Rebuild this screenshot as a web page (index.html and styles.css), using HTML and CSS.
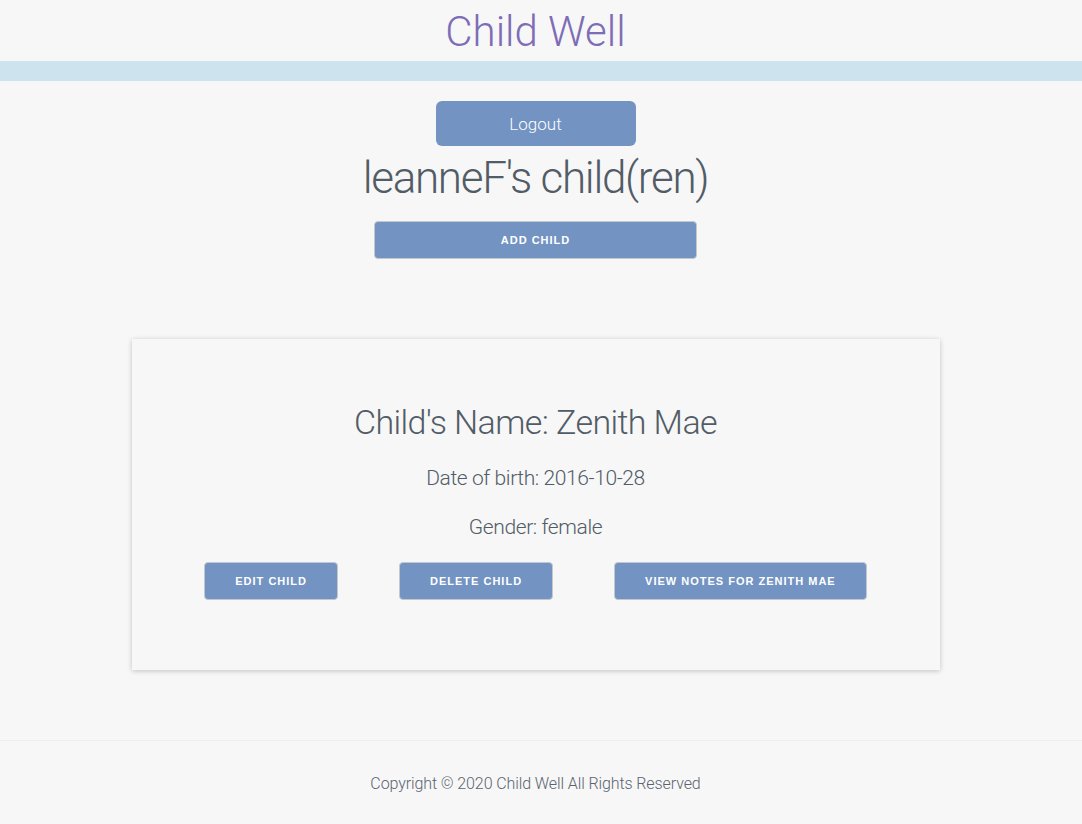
FILE: index.html
```html
<!DOCTYPE html>
<html>
<head>
<meta charset="utf-8">
<link rel="stylesheet" href="styles.css">
</head>
<body>
<header class="site-header">
  <div class="brand">Child Well</div>
</header>
<div class="band"></div>
<main class="content">
  <button class="logout">Logout</button>
  <h1 class="page-title">leanneF's child(ren)</h1>
  <button class="btn btn-wide">Add Child</button>
  <section class="card">
    <h2 class="child-name">Child's Name: Zenith Mae</h2>
    <p class="child-info">Date of birth: 2016-10-28</p>
    <p class="child-info gender">Gender: female</p>
    <div class="actions">
      <button class="btn">Edit Child</button>
      <button class="btn">Delete Child</button>
      <button class="btn">View notes for Zenith Mae</button>
    </div>
  </section>
</main>
<footer class="site-footer">
  <p>Copyright © 2020 Child Well All Rights Reserved</p>
</footer>
</body>
</html>
```

FILE: styles.css
```css
* { box-sizing: border-box; }
html, body { margin: 0; padding: 0; }
body {
  background: #f7f7f7;
  font-family: Roboto, "Liberation Sans", sans-serif;
  font-weight: 300;
  color: #525c66;
  height: 824px;
  overflow: hidden;
}
.site-header {
  height: 61px;
  display: flex;
  justify-content: center;
  align-items: flex-end;
  padding-right: 11px;
}
.brand {
  font-size: 42px;
  color: #7e6db6;
  line-height: 1;
  padding-bottom: 8px;
  letter-spacing: 0;
}
.band {
  height: 20px;
  background: #cde4ee;
}
.content {
  display: flex;
  flex-direction: column;
  align-items: center;
  padding-right: 11px;
}
.logout {
  margin-top: 20px;
  width: 200px;
  height: 45px;
  border: none;
  border-radius: 6px;
  background: #7393c2;
  color: #fff;
  font-family: Roboto, "Liberation Sans", sans-serif;
  font-weight: 300;
  font-size: 17px;
}
.page-title {
  margin: 2px 0 0;
  font-size: 44px;
  font-weight: 300;
  line-height: 60px;
  letter-spacing: -1.3px;
}
.btn {
  height: 38px;
  padding: 0 30px;
  border: 1px solid #c4c8cc;
  border-radius: 4px;
  background: #7393c2;
  color: #fff;
  font-family: "Liberation Sans", Arial, sans-serif;
  font-weight: 700;
  font-size: 11px;
  letter-spacing: 1px;
  text-transform: uppercase;
}
.btn-wide {
  margin-top: 13px;
  width: 323px;
}
.card {
  margin-top: 80px;
  width: 808px;
  height: 331px;
  background: #f7f7f7;
  box-shadow: 0 1px 5px rgba(0,0,0,0.22);
  display: flex;
  flex-direction: column;
  align-items: center;
  padding-top: 60px;
}
.child-name {
  margin: 0;
  font-size: 34px;
  font-weight: 300;
  line-height: 46px;
  letter-spacing: -0.6px;
}
.child-info {
  margin: 19px 0 0;
  font-size: 21px;
  line-height: 29px;
  letter-spacing: -0.4px;
}
.child-info.gender { margin-top: 20px; }
.actions {
  margin-top: 20px;
  display: flex;
  gap: 61px;
}
.site-footer {
  margin-top: 70px;
  border-top: 1px solid #efefef;
  text-align: center;
  padding-right: 11px;
}
.site-footer p {
  margin: 33px 0 0;
  font-size: 16px;
  color: #5a6470;
  letter-spacing: -0.1px;
}
```
